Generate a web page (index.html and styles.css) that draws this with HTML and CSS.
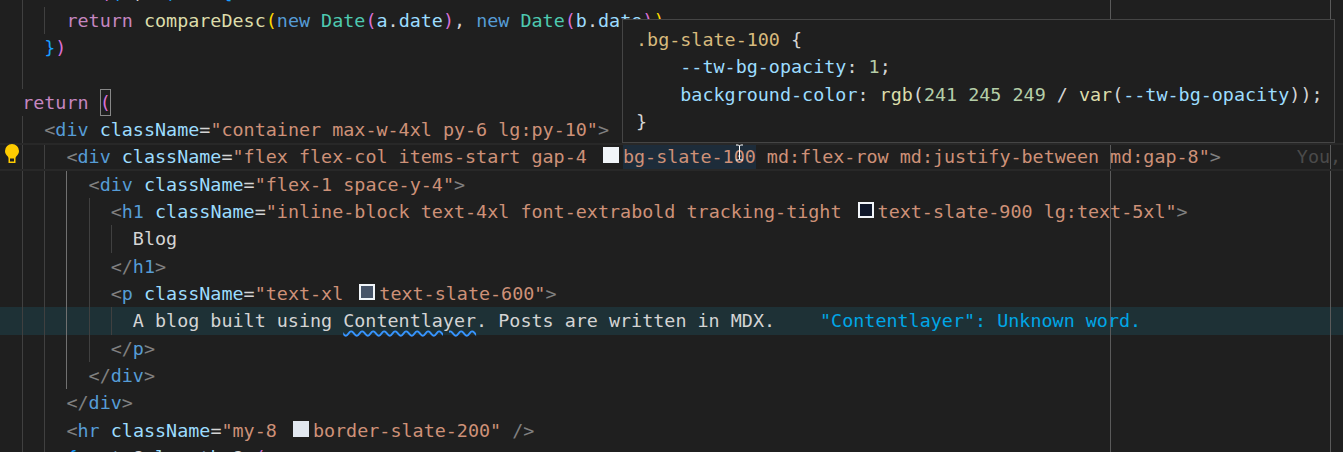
FILE: index.html
```html
<!DOCTYPE html>
<html lang="en">
<head>
<meta charset="utf-8">
<title>Editor</title>
<link rel="stylesheet" href="styles.css">
</head>
<body>
<main class="editor">
<div class="ln"><i class="g"></i><span class="t">.</span><span class="f">sort</span><span class="pk">(</span><span class="bl">(</span><span class="v">a</span><span class="t">, </span><span class="v">b</span><span class="bl">)</span><span class="t"> </span><span class="k">=&gt;</span><span class="t"> </span><span class="bl">{</span></div>
<div class="ln"><i class="g"></i><i class="g"></i><span class="pu">return</span><span class="t"> </span><span class="f">compareDesc</span><span class="y">(</span><span class="k">new</span><span class="t"> </span><span class="c">Date</span><span class="pk">(</span><span class="v">a</span><span class="t">.</span><span class="v">date</span><span class="pk">)</span><span class="t">, </span><span class="k">new</span><span class="t"> </span><span class="c">Date</span><span class="pk">(</span><span class="v">b</span><span class="t">.</span><span class="v">date</span><span class="pk">)</span><span class="y">)</span></div>
<div class="ln"><i class="g"></i><span class="bl">}</span><span class="pk">)</span></div>
<div class="ln"><i class="g"></i></div>
<div class="ln"><span class="pu">return</span><span class="t"> </span><span class="match"><span class="pk">(</span></span></div>
<div class="ln"><i class="g"></i><span class="a">&lt;</span><span class="k">div</span><span class="t"> </span><span class="v">className</span><span class="t">=</span><span class="s">"container max-w-4xl py-6 lg:py-10"</span><span class="a">&gt;</span></div>
<div class="ln cur"><span class="bulb"><svg class="bulb-svg" width="16" height="21" viewBox="0 0 16 21"><path class="bulb-fill" d="M8 1a7 7 0 0 0-7 7c0 2.500 1.300 3.900 2.600 5.300.5.600.9 1.200.9 1.900V20h7v-4.800c0-.7.4-1.300.9-1.900C13.700 11.900 15 10.500 15 8a7 7 0 0 0-7-7z"/><rect class="bulb-hole" x="6" y="15.500" width="4" height="3"/></svg></span><i class="g"></i><i class="g"></i><span class="a">&lt;</span><span class="k">div</span><span class="t"> </span><span class="v">className</span><span class="t">=</span><span class="s">"flex flex-col items-start gap-4 </span><span class="sw sw-100"></span><span class="s sel">bg-slate-100</span><span class="s"> md:flex-row md:justify-between md:gap-8"</span><span class="a">&gt;</span><span class="blame">You,</span></div>
<div class="ln"><i class="g"></i><i class="g"></i><i class="g on"></i><span class="a">&lt;</span><span class="k">div</span><span class="t"> </span><span class="v">className</span><span class="t">=</span><span class="s">"flex-1 space-y-4"</span><span class="a">&gt;</span></div>
<div class="ln"><i class="g"></i><i class="g"></i><i class="g on"></i><i class="g"></i><span class="a">&lt;</span><span class="k">h1</span><span class="t"> </span><span class="v">className</span><span class="t">=</span><span class="s">"inline-block text-4xl font-extrabold tracking-tight </span><span class="sw sw-900"></span><span class="s">text-slate-900 lg:text-5xl"</span><span class="a">&gt;</span></div>
<div class="ln"><i class="g"></i><i class="g"></i><i class="g on"></i><i class="g"></i><i class="g"></i><span class="t">Blog</span></div>
<div class="ln"><i class="g"></i><i class="g"></i><i class="g on"></i><i class="g"></i><span class="a">&lt;/</span><span class="k">h1</span><span class="a">&gt;</span></div>
<div class="ln"><i class="g"></i><i class="g"></i><i class="g on"></i><i class="g"></i><span class="a">&lt;</span><span class="k">p</span><span class="t"> </span><span class="v">className</span><span class="t">=</span><span class="s">"text-xl </span><span class="sw sw-600"></span><span class="s">text-slate-600"</span><span class="a">&gt;</span></div>
<div class="ln diag"><i class="g"></i><i class="g"></i><i class="g on"></i><i class="g"></i><i class="g"></i><span class="t">A blog built using <span class="squig">Contentlayer</span>. Posts are written in MDX.</span><span class="msg">"Contentlayer": Unknown word.</span></div>
<div class="ln"><i class="g"></i><i class="g"></i><i class="g on"></i><i class="g"></i><span class="a">&lt;/</span><span class="k">p</span><span class="a">&gt;</span></div>
<div class="ln"><i class="g"></i><i class="g"></i><i class="g on"></i><span class="a">&lt;/</span><span class="k">div</span><span class="a">&gt;</span></div>
<div class="ln"><i class="g"></i><i class="g"></i><span class="a">&lt;/</span><span class="k">div</span><span class="a">&gt;</span></div>
<div class="ln"><i class="g"></i><i class="g"></i><span class="a">&lt;</span><span class="k">hr</span><span class="t"> </span><span class="v">className</span><span class="t">=</span><span class="s">"my-8 </span><span class="sw sw-200"></span><span class="s">border-slate-200"</span><span class="t"> </span><span class="a">/&gt;</span></div>
<div class="ln"><i class="g"></i><i class="g"></i><span class="bl">{</span><span class="v">posts</span><span class="t">?.</span><span class="v">length</span><span class="t"> ? </span><span class="pk">(</span></div>
<div class="ruler r1"></div>
<div class="ruler r2"></div>
<aside class="hover">
<div class="hl"><span class="sel-c">.bg-slate-100</span><span class="t"> {</span></div>
<div class="hl">    <span class="v">--tw-bg-opacity</span><span class="t">: </span><span class="n">1</span><span class="t">;</span></div>
<div class="hl">    <span class="v">background-color</span><span class="t">: </span><span class="fn">rgb</span><span class="t">(</span><span class="n">241 245 249</span><span class="t"> / </span><span class="fn">var</span><span class="t">(</span><span class="v">--tw-bg-opacity</span><span class="t">));</span></div>
<div class="hl"><span class="t">}</span></div>
</aside>
<svg class="ibeam" width="9" height="17" viewBox="0 0 9 17"><path d="M1 1h2.500l1 1 1-1H8M4.500 2v13M1 16h2.500l1-1 1 1H8" fill="none" stroke="#fff" stroke-width="1"/></svg>
</main>
</body>
</html>
```
FILE: styles.css
```css
html, body { margin: 0; height: 100%; background: #1f1f1f; overflow: hidden; }
.editor {
  position: relative;
  isolation: isolate;
  height: 452px;
  overflow: hidden;
  padding-left: 22.15px;
  font: 18.4px/27.33px "DejaVu Sans Mono", "Liberation Mono", monospace;
  color: #ccc;
}
.ln { height: 27.33px; display: flex; align-items: stretch; position: relative; white-space: pre; }
.ln:first-child { margin-top: -20.7px; }
.ln > span { display: block; }
.g { display: block; width: 22.15px; flex: none; box-sizing: border-box; border-left: 1px solid #404040; }
.g.on { border-left-color: #707070; }
.cur::before { content: ""; position: absolute; left: -22.15px; right: 0; top: 0; bottom: 0; border-top: 2px solid #282828; border-bottom: 2px solid #282828; }
.diag::before { content: ""; position: absolute; left: -22.15px; width: 1343px; top: 0; bottom: 0; background: #1e3136; z-index: -1; }
.bulb { position: absolute; left: -18.15px; top: 0; width: 16px; height: 21px; }
.bulb-svg { display: block; }
.bulb-fill { fill: #ffcc00; }
.bulb-hole { fill: #1f1f1f; }
.t { color: #d4d4d4; }
.pu { color: #c586c0; }
.f { color: #dcdcaa; }
.k { color: #569cd6; }
.c { color: #4ec9b0; }
.v { color: #9cdcfe; }
.s { color: #ce9178; }
.a { color: #808080; }
.y { color: #ffd700; }
.pk { color: #da70d6; }
.bl { color: #179fff; }
.n { color: #b5cea8; }
.fn { color: #dcdcaa; }
.sel-c { color: #d7ba7d; }
.match { display: block; height: 27px; box-sizing: border-box; outline: 1px solid #888; outline-offset: -1px; }
.sw { display: block; flex: none; width: 16px; height: 16px; margin: 4px 4px 0 5px; box-sizing: border-box; border: 2px solid #f1f5f9; }
.sw-100 { background: #f1f5f9; }
.sw-900 { background: #0f172a; }
.sw-600 { background: #475569; }
.sw-200 { background: #e2e8f0; border-color: #e2e8f0; }
.sel { background: #1d2c3a; }
.blame { color: #4a4a4a; margin-left: 76px; }
.squig { text-decoration: underline wavy #3794ff 1.5px; text-underline-offset: 3px; }
.msg { color: #00a6e6; margin-left: 45px; }
.ruler { position: absolute; top: 0; bottom: 0; width: 1px; background: #5a5a5a; z-index: -1; }
.r1 { left: 1110px; }
.r2 { left: 1330px; }
.hover {
  position: absolute;
  left: 622px;
  top: 19px;
  width: 713px;
  height: 124px;
  box-sizing: border-box;
  background: #1f1f1f;
  border: 1px solid #454545;
  padding: 6px 0 0 13px;
}
.hl { height: 27.33px; white-space: pre; }
.ibeam { position: absolute; left: 735px; top: 144px; }
```
